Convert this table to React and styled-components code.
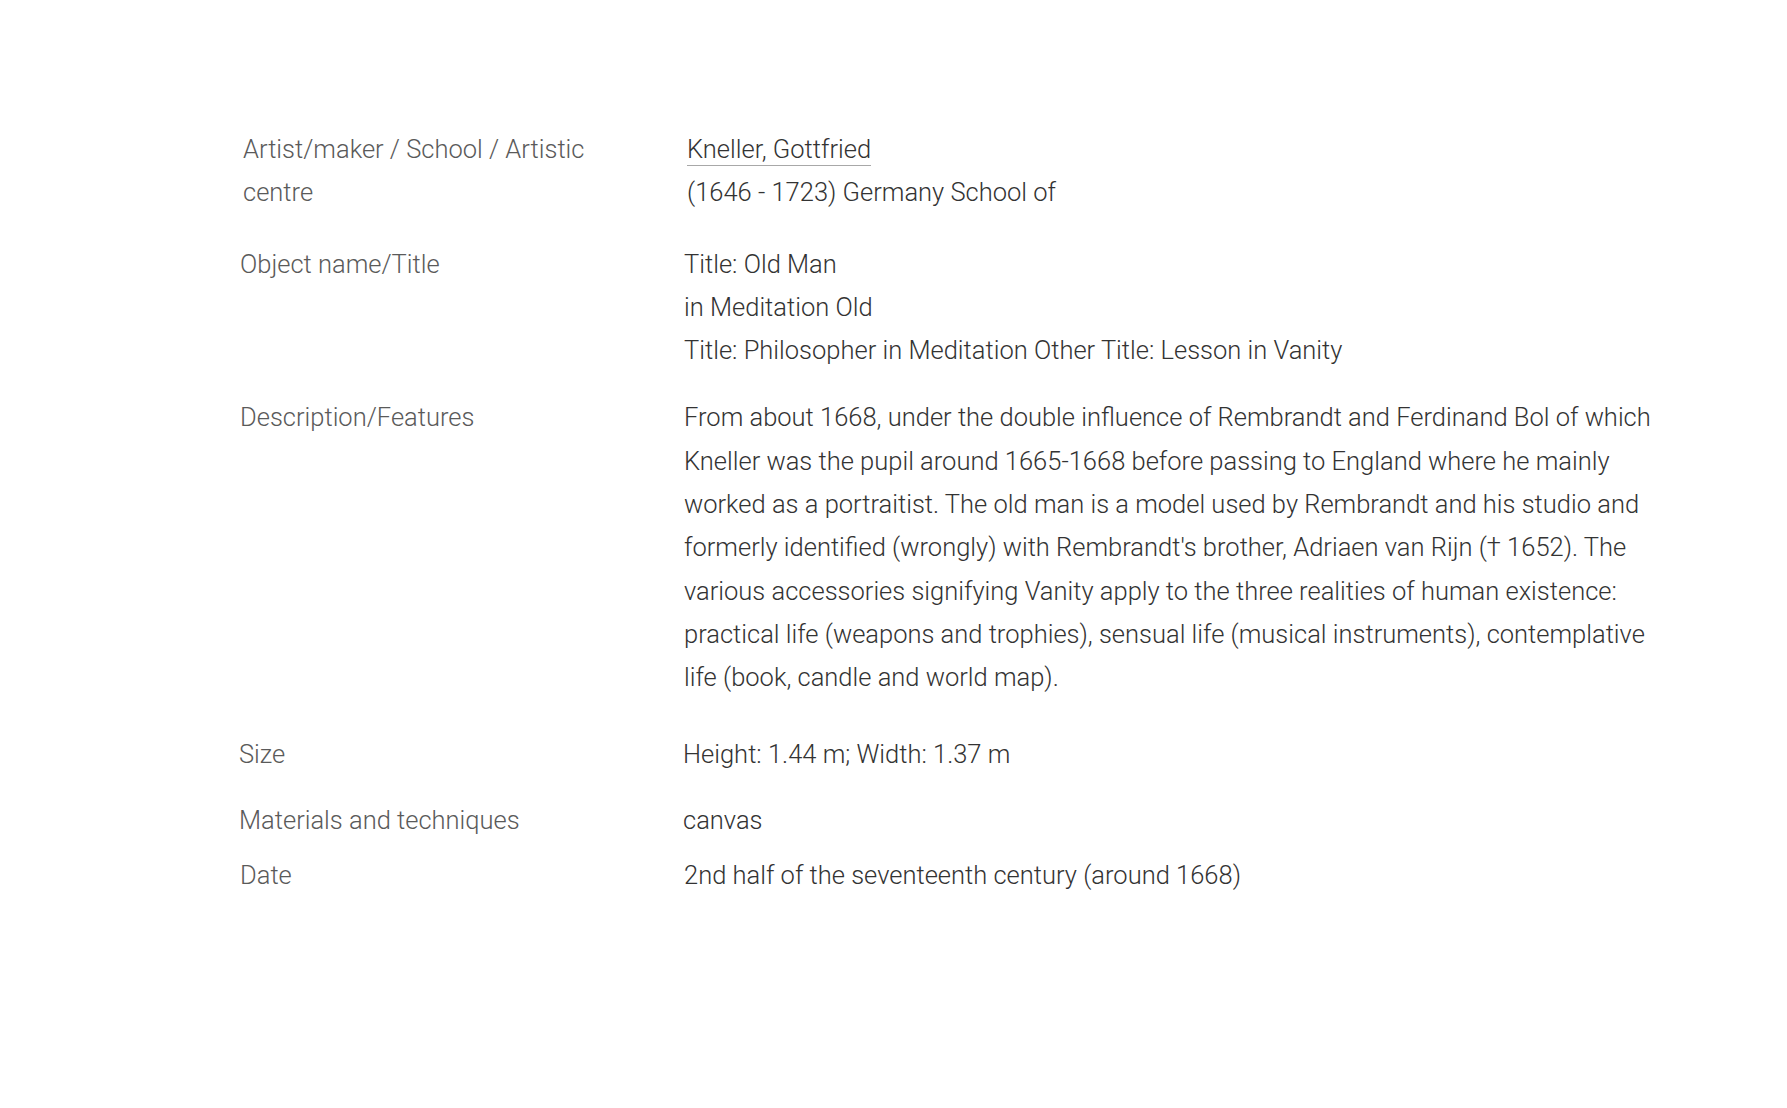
import React from "react";
import styled, { createGlobalStyle } from "styled-components";

const Global = createGlobalStyle`
  html, body { margin: 0; padding: 0; background: #fff; }
  body { font-family: Roboto, "Noto Sans", "Liberation Sans", sans-serif; font-weight: 300; }
`;

const Page = styled.main`
  width: 1787px;
  min-height: 1108px;
  box-sizing: border-box;
  padding: 128px 0 0 240px;
`;

const List = styled.dl`
  margin: 0;
  display: flex;
  flex-direction: column;
`;

const Row = styled.div`
  display: grid;
  grid-template-columns: 444px 990px;
  margin-top: ${(p) => p.$gap || 0}px;
  transform: translateX(${(p) => p.$shift || 0}px);
`;

const Label = styled.dt`
  margin: 0;
  font-size: 25.5px;
  line-height: 43.3px;
  color: #5a5a5a;
  max-width: 370px;
`;

const Value = styled.dd`
  margin: 0;
  font-size: 25.5px;
  line-height: 43.3px;
  color: #333;
`;

const Line = styled.div``;

const ArtistLink = styled.a`
  color: #333;
  text-decoration: none;
  border-bottom: 1.5px solid #a8a8a8;
  padding-bottom: 1px;
`;

export default function App() {
  return (
    <>
      <Global />
      <Page>
        <List>
          <Row $shift={3}>
            <Label>Artist/maker / School / Artistic centre</Label>
            <Value>
              <Line>
                <ArtistLink href="#">Kneller, Gottfried</ArtistLink>
              </Line>
              <Line>(1646 - 1723) Germany School of</Line>
            </Value>
          </Row>
          <Row $gap={28}>
            <Label>Object name/Title</Label>
            <Value>
              <Line>Title: Old Man</Line>
              <Line>in Meditation Old</Line>
              <Line>Title: Philosopher in Meditation Other Title: Lesson in Vanity</Line>
            </Value>
          </Row>
          <Row $gap={24}>
            <Label>Description/Features</Label>
            <Value>
              From about 1668, under the double influence of Rembrandt and Ferdinand Bol of which
              Kneller was the pupil around 1665-1668 before passing to England where he mainly
              worked as a portraitist. The old man is a model used by Rembrandt and his studio and
              formerly identified (wrongly) with Rembrandt's brother, Adriaen van Rijn († 1652). The
              various accessories signifying Vanity apply to the three realities of human existence:
              practical life (weapons and trophies), sensual life (musical instruments), contemplative
              life (book, candle and world map).
            </Value>
          </Row>
          <Row $gap={33} $shift={-1}>
            <Label>Size</Label>
            <Value>Height: 1.44 m; Width: 1.37 m</Value>
          </Row>
          <Row $gap={23} $shift={-1}>
            <Label>Materials and techniques</Label>
            <Value>canvas</Value>
          </Row>
          <Row $gap={12}>
            <Label>Date</Label>
            <Value>2nd half of the seventeenth century (around 1668)</Value>
          </Row>
        </List>
      </Page>
    </>
  );
}
